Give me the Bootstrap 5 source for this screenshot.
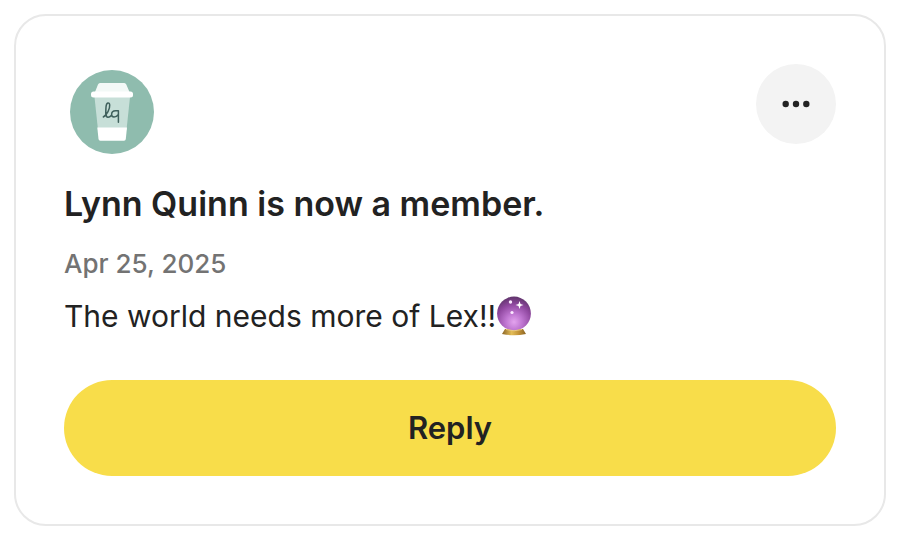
<!DOCTYPE html>
<html lang="en">
<head>
<meta charset="utf-8">
<meta name="viewport" content="width=device-width, initial-scale=1">
<title>New member</title>
<link href="https://cdn.jsdelivr.net/npm/bootstrap@5.3.0/dist/css/bootstrap.min.css" rel="stylesheet">
<style>
body { font-family: Inter, "Liberation Sans", sans-serif; color: #222; background: #fff; }
.page { padding: 14px 18px 14px 14px; }
.post { --bs-card-border-color: #e8e8e8; --bs-card-border-width: 2px; --bs-card-border-radius: 32px; color: #222; }
.post-body { padding: 48px; }
.avatar { width: 84px; height: 84px; margin: 6px; }
.more { width: 80px; height: 80px; background: #f3f3f3; color: #222; }
.more:hover { background: #e8e8e8; }
.headline { font-size: 34px; line-height: 44px; font-weight: 600; margin: 22px 0 0; }
.posted { font-size: 26px; line-height: 36px; font-weight: 500; color: #737373; margin-top: 20px; }
.message { font-size: 30px; line-height: 48px; margin: 10px 0 40px; }
.orb { width: 36px; height: 40px; }
.reply { height: 96px; font-size: 31px; line-height: 48px; font-weight: 600; background: #f8dd4a; color: #222; }
.reply:hover { background: #efd239; }
</style>
<script src="https://cdn.jsdelivr.net/npm/bootstrap@5.3.0/dist/js/bootstrap.bundle.min.js"></script>
</head>
<body>
<main class="page">
  <article class="card post">
    <div class="post-body d-flex flex-column">
      <header class="d-flex justify-content-between align-items-start">
        <svg class="avatar" viewBox="0 0 84 84" role="img" aria-label="Lynn Quinn">
          <circle cx="42" cy="42" r="42" fill="#8fbcae"/>
          <path d="M24.500 27H60L56.500 60H28Z" fill="#c7dfd8"/>
          <path d="M27.300 57.500H57L55.800 69Q55.600 70.700 54 70.700H30.300Q28.700 70.700 28.500 69Z" fill="#fff"/>
          <path d="M25 22L28 14.500Q28.600 13 30 13H54.300Q55.700 13 56.300 14.500L59.500 22Z" fill="#f3f9f7"/>
          <rect x="21" y="21.500" width="42" height="6" rx="2.500" fill="#fff"/>
          <path d="M33.300 47C37 45 40 38.500 39.700 35C39.500 32 36.300 31.800 36 37C35.600 43 35.300 47 37.800 47.200C39.500 47.300 40.500 46.500 41.300 45.500M48.400 40.700H45.500C42.500 40.700 41.600 42.500 41.600 44.500C41.600 47.700 45.700 48 48.400 44.500M48.400 40.700V52.300" fill="none" stroke="#3f605c" stroke-width="1.500" stroke-linecap="round" stroke-linejoin="round"/>
        </svg>
        <button type="button" class="btn more border-0 rounded-circle p-0 d-flex align-items-center justify-content-center" aria-label="More options">
          <svg width="28" height="8" viewBox="0 0 28 8" fill="currentColor" aria-hidden="true"><circle cx="3.700" cy="4" r="3.200"/><circle cx="14" cy="4" r="3.200"/><circle cx="24.300" cy="4" r="3.200"/></svg>
        </button>
      </header>
      <h1 class="headline">Lynn Quinn is now a member.</h1>
      <time class="posted" datetime="2025-04-25">Apr 25, 2025</time>
      <p class="message d-flex align-items-center"><span>The world needs more of Lex!!</span><svg class="orb" viewBox="0 0 36 40" role="img" aria-label="crystal ball">
          <defs>
            <radialGradient id="glass" cx=".5" cy=".75" r=".8"><stop offset="0" stop-color="#e3a3ee"/><stop offset=".3" stop-color="#c077d2"/><stop offset=".65" stop-color="#8f479f"/><stop offset="1" stop-color="#55305f"/></radialGradient>
            <linearGradient id="brass"><stop offset="0" stop-color="#8a6425"/><stop offset=".4" stop-color="#e3bd58"/><stop offset=".7" stop-color="#c29237"/><stop offset="1" stop-color="#8a6425"/></linearGradient>
          </defs>
          <path d="M9 33H27L30 38Q18 40.500 6 38Z" fill="url(#brass)"/>
          <circle cx="18" cy="17.500" r="16.900" fill="url(#glass)"/>
          <path d="M10 33.500Q18 36 26 33.500" fill="none" stroke="#e8c985"/>
          <path d="M23.500 5L24.500 8L27.500 9L24.500 10L23.500 13L22.500 10L19.500 9L22.500 8Z" fill="#fff"/>
          <circle cx="14.500" cy="6" r="1.700" fill="#fbe9ff"/><circle cx="16" cy="16.500" r="1.600" fill="#fbe9ff"/>
        </svg></p>
      <button type="button" class="btn reply border-0 rounded-pill w-100">Reply</button>
    </div>
  </article>
</main>
</body>
</html>
